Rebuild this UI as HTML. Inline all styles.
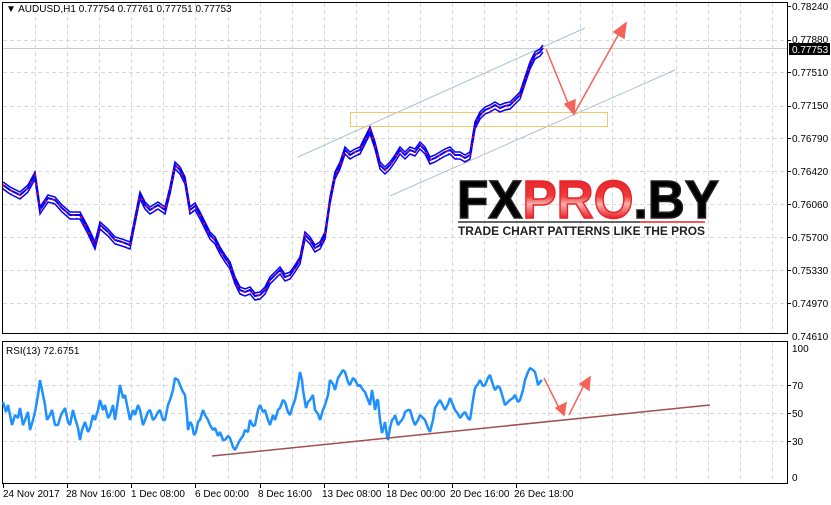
<!DOCTYPE html>
<html><head><meta charset="utf-8"><style>
body{margin:0;background:#fff;width:831px;height:505px;overflow:hidden}
svg{display:block}
text{font-family:"Liberation Sans",sans-serif;font-size:10px;fill:#000}
</style></head><body>
<svg width="831" height="505" viewBox="0 0 831 505">
<defs>
<linearGradient id="gk" gradientUnits="userSpaceOnUse" x1="0" y1="178" x2="0" y2="218"><stop offset="0" stop-color="#444"/><stop offset=".45" stop-color="#111"/><stop offset=".6" stop-color="#aaa"/><stop offset="1" stop-color="#2a2a2a"/></linearGradient>
<linearGradient id="gr" gradientUnits="userSpaceOnUse" x1="0" y1="178" x2="0" y2="218"><stop offset="0" stop-color="#e8232a"/><stop offset=".45" stop-color="#ee3a3a"/><stop offset=".65" stop-color="#f8b0ab"/><stop offset="1" stop-color="#e8232a"/></linearGradient>
<polyline id="pr" points="3,185 10,190 20,195 28,188 35,175 40,210 48,198 55,200 62,208 70,215 80,215 88,230 95,245 100,225 108,232 115,240 122,242 130,245 135,220 140,195 145,205 150,210 158,205 165,210 170,190 175,165 180,170 185,180 190,210 195,206 200,215 205,225 210,235 215,240 220,250 225,258 230,265 235,280 240,290 245,292 250,290 255,296 260,295 265,290 270,280 275,275 280,270 285,277 290,275 295,268 300,260 305,235 310,240 315,248 320,245 325,235 330,200 335,175 340,165 345,150 350,155 355,152 360,150 365,140 370,130 375,145 380,165 385,170 390,165 395,158 400,150 405,155 410,150 415,152 420,145 425,150 430,160 435,158 440,155 445,152 450,150 455,155 460,155 465,158 470,155 475,125 480,115 485,110 490,108 495,105 500,108 505,106 510,105 515,100 520,95 525,80 530,65 535,55 540,52 543,48"/>
</defs>
<g stroke="#d8d8d8" stroke-dasharray="4,3" stroke-width="1">
<path d="M35.5 3V333M67.5 3V333M99.5 3V333M131.5 3V333M163.5 3V333M195.5 3V333M228.5 3V333M260.5 3V333M292.5 3V333M324.5 3V333M356.5 3V333M388.5 3V333M420.5 3V333M452.5 3V333M484.5 3V333M516.5 3V333M548.5 3V333M580.5 3V333M612.5 3V333M644.5 3V333M676.5 3V333M708.5 3V333M740.5 3V333M772.5 3V333"/>
<path d="M3 40.5H787M3 72.5H787M3 106.5H787M3 138.5H787M3 171.5H787M3 204.5H787M3 237.5H787M3 270.5H787M3 303.5H787"/>
<path d="M35.5 342V483M67.5 342V483M99.5 342V483M131.5 342V483M163.5 342V483M195.5 342V483M228.5 342V483M260.5 342V483M292.5 342V483M324.5 342V483M356.5 342V483M388.5 342V483M420.5 342V483M452.5 342V483M484.5 342V483M516.5 342V483M548.5 342V483M580.5 342V483M612.5 342V483M644.5 342V483M676.5 342V483M708.5 342V483M740.5 342V483M772.5 342V483"/>
<path d="M3 385.5H787M3 413.5H787M3 441.5H787"/>
</g>
<path d="M3 48.5H787" stroke="#ccc"/>
<rect x="2.5" y="2.5" width="785" height="331" fill="none" stroke="#000"/>
<rect x="2.5" y="341.5" width="785" height="142" fill="none" stroke="#000"/>
<path d="M298 157L585 28M390 196L675 70" stroke="#a9c1d4" stroke-width="1"/>
<rect x="350.5" y="112.5" width="257" height="14" fill="none" stroke="#f3c96a"/>
<g fill="none">
<use href="#pr" stroke="#0000ff" stroke-width="1.5" transform="translate(0,4)"/>
<use href="#pr" stroke="#0000ff" stroke-width="1.5" transform="translate(0,-3)"/>
<use href="#pr" stroke="#0000ff" stroke-width="2"/>
<use href="#pr" stroke="#ff0000" stroke-width="1.5" stroke-dasharray="2,7"/>
<use href="#pr" stroke="#ff0000" stroke-width="1" stroke-dasharray="1,9" transform="translate(0,3)"/>
</g>
<g stroke="#f4635a" stroke-width="1.5" fill="#f4635a">
<path d="M546 49L570 108" fill="none"/><path d="M565 104L574 114L575 100Z"/>
<path d="M574 114L621 30" fill="none"/><path d="M614 32L626 23L624 38Z"/>
</g>
<text x="457" y="218" style="font-size:54px;font-weight:bold;font-family:'Liberation Sans',sans-serif;stroke:#222;stroke-width:1.5" fill="url(#gk)" textLength="262" lengthAdjust="spacingAndGlyphs">FX<tspan fill="url(#gr)" style="stroke:#e8232a">PRO</tspan>.BY</text>
<path d="M458 222H640" stroke="#333" stroke-width="1.5"/><path d="M640 222H705" stroke="#e8232a" stroke-width="1.5"/>
<text x="458" y="235" style="font-size:12px;font-weight:bold;fill:#222" textLength="247" lengthAdjust="spacingAndGlyphs">TRADE CHART PATTERNS LIKE THE PROS</text>
<polyline fill="none" stroke="#1e90ff" stroke-width="2.5" stroke-linejoin="bevel" points="3,402 6,412 8,405 12,425 15,415 18,418 20,408 23,425 25,420 28,412 30,430 33,420 35,412 38,395 40,380 43,395 45,405 47,420 50,415 52,410 55,425 58,425 61,415 65,408 68,422 70,425 73,410 75,418 78,428 80,440 82,430 85,422 88,432 90,428 93,415 95,420 98,410 100,400 103,410 105,405 108,418 110,415 113,405 115,420 118,400 120,385 123,398 125,395 128,410 130,420 133,410 135,415 138,405 140,410 143,425 145,420 148,412 150,410 153,420 155,418 158,412 160,410 163,420 165,420 168,405 170,400 173,390 175,378 178,380 180,385 183,392 185,395 187,415 188,430 190,422 192,425 194,435 196,432 198,422 200,420 203,410 205,415 208,420 210,425 213,430 215,428 218,436 220,432 223,440 225,440 228,436 230,438 233,447 235,450 238,444 240,440 243,436 245,430 248,432 250,420 253,426 255,425 258,410 260,405 263,412 265,410 268,420 270,425 273,415 275,420 278,410 280,408 283,400 285,402 288,412 290,415 293,405 295,400 298,385 300,372 302,380 303,390 306,408 308,402 310,400 313,395 315,410 318,414 320,420 323,410 325,405 328,395 330,380 333,384 335,390 338,378 340,375 343,370 345,372 348,382 350,385 353,378 355,380 358,386 360,385 363,390 365,392 368,400 370,405 372,390 374,402 375,410 377,400 378,400 380,420 382,433 384,426 385,422 387,436 388,440 390,428 392,420 394,418 395,415 398,425 400,422 402,420 404,416 405,412 408,410 410,410 413,420 415,425 418,420 420,415 423,418 425,420 428,428 430,432 433,420 435,408 438,403 440,400 443,406 445,410 448,404 450,398 453,405 455,410 458,414 460,418 463,414 465,412 468,418 470,420 473,400 475,388 478,384 480,380 483,386 485,385 488,378 490,375 493,385 495,390 498,386 500,388 503,398 505,405 508,402 510,400 513,398 515,395 518,402 520,400 523,390 525,380 528,372 530,368 533,370 535,372 537,380 538,385 540,382 542,380"/>
<path d="M212 456L710 405" stroke="#a05050" stroke-width="1.5"/>
<g stroke="#f4635a" stroke-width="1.5" fill="#f4635a">
<path d="M544 378L560 410" fill="none"/><path d="M556 408L564 415L566 403Z"/>
<path d="M569 415L585 383" fill="none"/><path d="M580 384L590 377L589 390Z"/>
</g>
<text x="6" y="12">&#9660; AUDUSD,H1  0.77754 0.77761 0.77751 0.77753</text>
<text x="6" y="354">RSI(13) 72.6751</text>
<g>
<text x="792" y="10">0.78240</text><text x="792" y="43">0.77880</text>
<rect x="789" y="43" width="41" height="12" fill="#000"/><text x="792" y="53" style="fill:#fff">0.77753</text>
<text x="792" y="76">0.77510</text><text x="792" y="109">0.77150</text><text x="792" y="142">0.76790</text><text x="792" y="175">0.76420</text><text x="792" y="208">0.76060</text><text x="792" y="241">0.75700</text><text x="792" y="274">0.75330</text><text x="792" y="307">0.74970</text><text x="792" y="340">0.74610</text>
<text x="792" y="352">100</text><text x="792" y="389">70</text><text x="792" y="417">50</text><text x="792" y="445">30</text><text x="792" y="481">0</text>
</g>
<g stroke="#000"><path d="M788 6.5h3M788 40.5h3M788 72.5h3M788 106.5h3M788 138.5h3M788 171.5h3M788 204.5h3M788 237.5h3M788 270.5h3M788 303.5h3M788 385.5h3M788 413.5h3M788 441.5h3M3.5 484v4M67.5 484v4M131.5 484v4M195.5 484v4M260.5 484v4M324.5 484v4M388.5 484v4M452.5 484v4M516.5 484v4"/></g>
<text x="3" y="497">24 Nov 2017</text><text x="66" y="497">28 Nov 16:00</text><text x="131" y="497">1 Dec 08:00</text><text x="195" y="497">6 Dec 00:00</text><text x="258" y="497">8 Dec 16:00</text><text x="322" y="497">13 Dec 08:00</text><text x="386" y="497">18 Dec 00:00</text><text x="450" y="497">20 Dec 16:00</text><text x="514" y="497">26 Dec 18:00</text>
</svg>
</body></html>
